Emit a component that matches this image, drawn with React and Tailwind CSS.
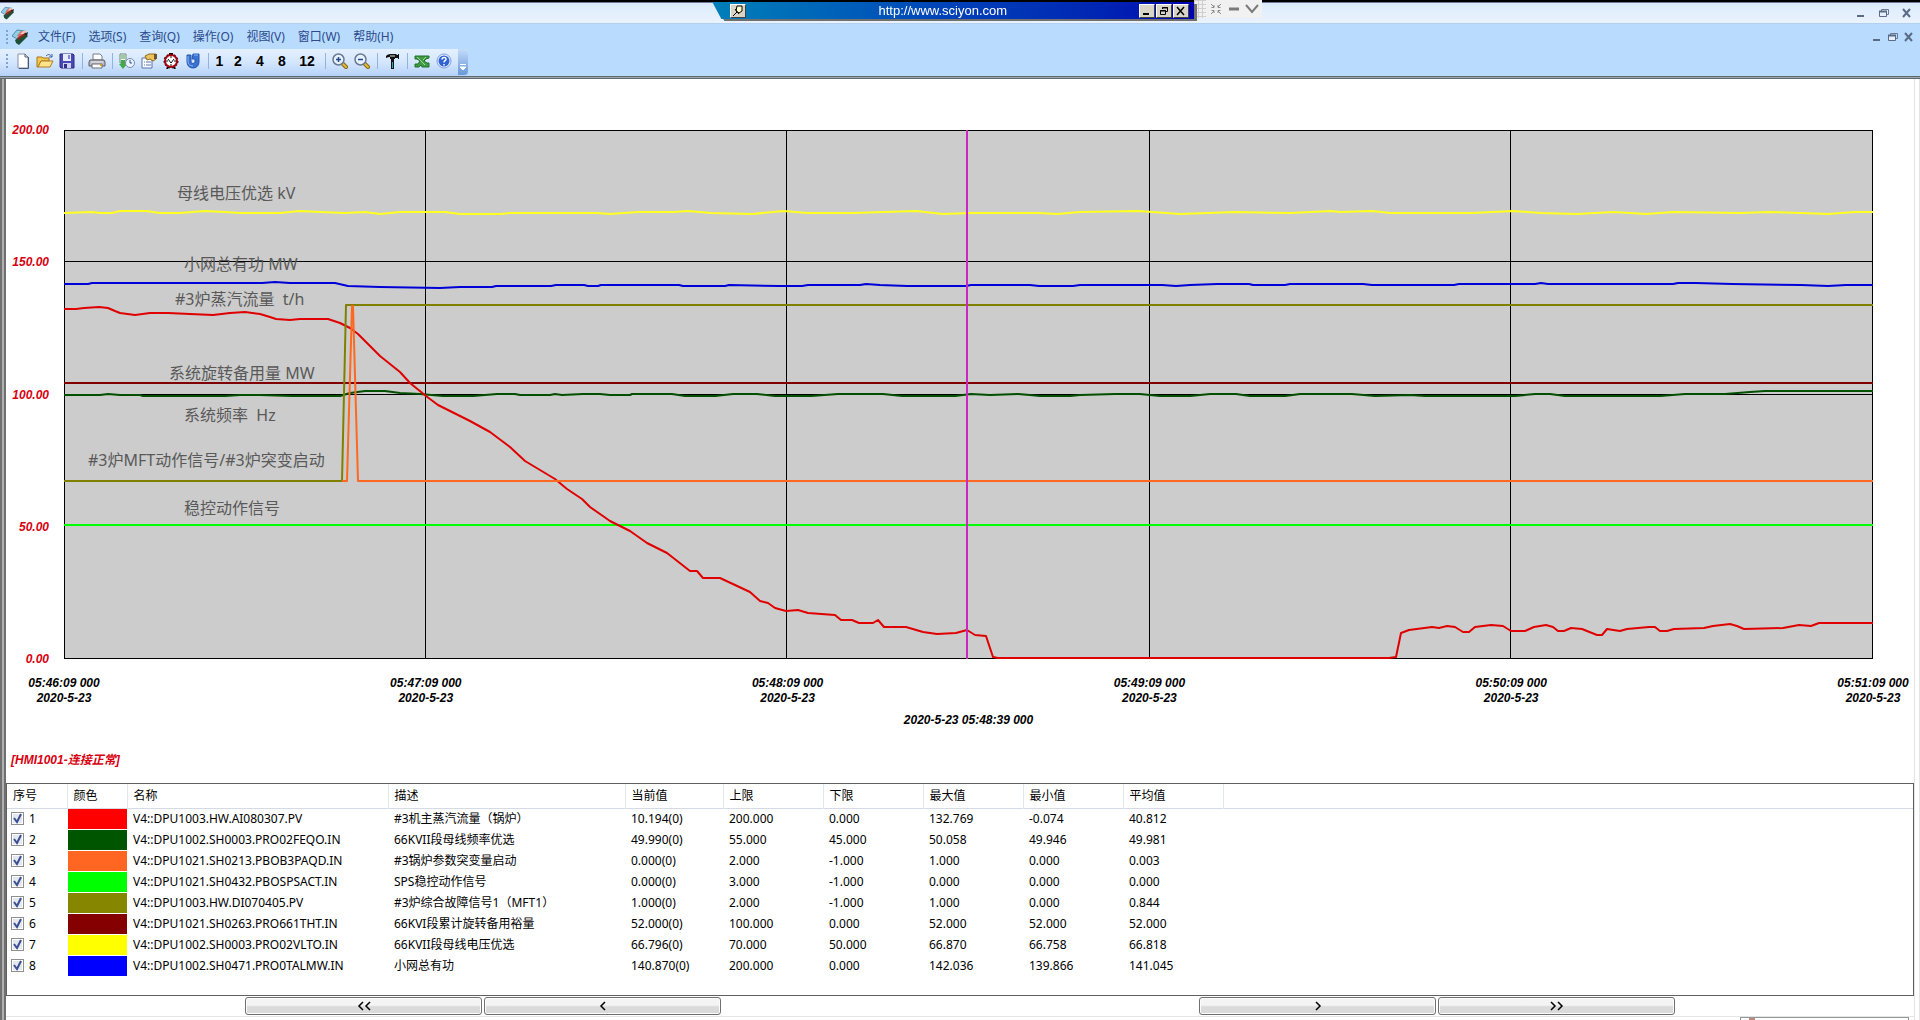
import React from "react";

const MENUS = ["文件(F)", "选项(S)", "查询(Q)", "操作(O)", "视图(V)", "窗口(W)", "帮助(H)"];

const Y_TICKS = ["200.00", "150.00", "100.00", "50.00", "0.00"];
const X_TICKS = ["05:46:09 000", "05:47:09 000", "05:48:09 000", "05:49:09 000", "05:50:09 000", "05:51:09 000"];
const V_LINES = [425, 786, 1149, 1510];
const H_LINES = [261, 394, 525];

const SERIES = [
  {
    color: "#00ff00",
    points: "64,525 1873,525",
  },
  { color: "#800000", points: "64,383 1873,383" },
  {
    color: "#005000",
    points:
      "64,395 100,395 108,394 120,395 140,395 143,396 225,396 240,395 260,395 292,396 340,396 350,393 365,391 385,391 400,393 420,394 443,396 473,396 497,394 515,394 520,395 550,395 555,394 562,395 583,394 600,394 610,395 630,395 632,394 672,394 685,396 715,396 733,394 757,394 775,396 811,396 838,394 883,394 902,396 955,396 971,394 990,395 1018,394 1030,395 1040,396 1070,396 1080,395 1115,394 1140,394 1160,396 1190,396 1210,394 1236,394 1250,396 1285,396 1300,394 1352,394 1375,396 1410,395 1425,396 1515,396 1535,394 1550,394 1565,396 1660,396 1685,394 1725,394 1750,392 1765,391 1873,391",
  },
  {
    color: "#ffff20",
    points:
      "64,213 92,212 100,213 112,213 120,211 146,211 160,213 180,213 205,211 225,212 240,213 280,213 300,211 320,212 345,213 365,212 380,214 400,212 445,212 460,214 501,214 510,213 597,213 610,214 638,212 674,212 688,211 711,213 752,214 784,211 807,213 852,213 916,211 943,214 971,213 1039,213 1057,214 1080,212 1139,211 1180,214 1235,212 1290,213 1331,211 1340,212 1372,211 1390,213 1472,213 1513,211 1541,213 1577,214 1614,212 1646,214 1673,212 1741,213 1769,212 1801,213 1828,214 1855,212 1873,212",
  },
  {
    color: "#0000d8",
    points:
      "64,284 88,284 92,283 262,283 275,282 290,283 335,283 348,286 380,287 440,288 460,287 492,287 496,286 551,286 556,285 584,285 588,286 598,286 601,285 679,285 683,286 725,286 729,285 779,286 802,286 808,285 860,285 866,284 880,285 907,286 966,286 971,285 1030,285 1039,286 1073,286 1080,285 1162,285 1176,286 1190,285 1217,284 1249,284 1253,285 1285,285 1290,284 1363,284 1372,285 1454,285 1459,284 1535,284 1541,283 1548,284 1673,284 1678,283 1696,283 1732,284 1801,285 1828,286 1846,285 1873,285",
  },
  {
    color: "#e00000",
    points:
      "64,309 76,309 84,308 99,307 108,308 115,311 120,313 135,315 150,313 168,313 190,314 213,315 230,313 245,312 260,314 270,317 276,319 290,320 300,319 328,319 340,323 350,328 358,334 365,341 380,356 400,372 410,383 426,396 438,405 470,421 490,432 510,447 525,461 555,479 567,489 582,499 590,507 610,521 630,531 647,543 667,553 690,571 697,571 703,578 720,578 750,592 760,601 768,603 775,608 786,611 798,610 808,613 835,615 841,620 852,620 859,623 873,623 878,620 884,627 906,627 923,632 937,634 956,633 967,630 975,635 986,636 993,657 998,658 1389,658 1396,657 1401,633 1409,630 1432,627 1439,628 1447,626 1455,627 1463,632 1469,632 1475,627 1491,625 1503,626 1511,631 1525,631 1534,627 1546,625 1553,627 1558,631 1564,631 1571,628 1582,629 1597,635 1602,635 1607,629 1620,631 1627,629 1649,627 1655,627 1660,631 1667,631 1674,629 1704,628 1713,626 1730,624 1737,626 1744,629 1783,628 1799,625 1811,626 1819,623 1873,623",
  },
  { color: "#808000", points: "64,481 342,481 346,305 1873,305" },
  { color: "#ff6820", points: "342,481 347,481 352,306 353,306 358,481 1873,481" },
];

const NOTES = [
  { text: "母线电压优选 kV", pos: "left-[113px] top-[10%]" },
  { text: "小网总有功 MW", pos: "left-[120px] top-[23.5%]" },
  { text: "#3炉蒸汽流量  t/h", pos: "left-[111px] top-[30%]" },
  { text: "系统旋转备用量 MW", pos: "left-[105px] top-[44%]" },
  { text: "系统频率  Hz", pos: "left-[120px] top-[52%]" },
  { text: "#3炉MFT动作信号/#3炉突变启动", pos: "left-[24px] top-[60.5%]" },
  { text: "稳控动作信号", pos: "left-[120px] top-[69.5%]" },
];

const HEADERS = [
  ["序号", "w-[60px]"],
  ["颜色", "w-[60px]"],
  ["名称", "w-[261px]"],
  ["描述", "w-[237px]"],
  ["当前值", "w-[98px]"],
  ["上限", "w-[100px]"],
  ["下限", "w-[100px]"],
  ["最大值", "w-[100px]"],
  ["最小值", "w-[100px]"],
  ["平均值", "w-[100px]"],
];

const ROWS = [
  ["bg-[#ff0000]", "V4::DPU1003.HW.AI080307.PV", "#3机主蒸汽流量（锅炉）", "10.194(0)", "200.000", "0.000", "132.769", "-0.074", "40.812"],
  ["bg-[#005500]", "V4::DPU1002.SH0003.PRO02FEQO.IN", "66KVII段母线频率优选", "49.990(0)", "55.000", "45.000", "50.058", "49.946", "49.981"],
  ["bg-[#ff6622]", "V4::DPU1021.SH0213.PBOB3PAQD.IN", "#3锅炉参数突变量启动", "0.000(0)", "2.000", "-1.000", "1.000", "0.000", "0.003"],
  ["bg-[#00ff00]", "V4::DPU1021.SH0432.PBOSPSACT.IN", "SPS稳控动作信号", "0.000(0)", "3.000", "-1.000", "0.000", "0.000", "0.000"],
  ["bg-[#868600]", "V4::DPU1003.HW.DI070405.PV", "#3炉综合故障信号1（MFT1）", "1.000(0)", "2.000", "-1.000", "1.000", "0.000", "0.844"],
  ["bg-[#850000]", "V4::DPU1021.SH0263.PRO661THT.IN", "66KVI段累计旋转备用裕量", "52.000(0)", "100.000", "0.000", "52.000", "52.000", "52.000"],
  ["bg-[#ffff00]", "V4::DPU1002.SH0003.PRO02VLTO.IN", "66KVII段母线电压优选", "66.796(0)", "70.000", "50.000", "66.870", "66.758", "66.818"],
  ["bg-[#0000ff]", "V4::DPU1002.SH0471.PRO0TALMW.IN", "小网总有功", "140.870(0)", "200.000", "0.000", "142.036", "139.866", "141.045"],
];

function Svg({ children, className = "h-4 w-4", box = "0 0 16 16" }) {
  return (
    <svg viewBox={box} className={className} fill="none" aria-hidden="true">
      {children}
    </svg>
  );
}

function AppIcon({ className }) {
  return (
    <Svg className={className}>
      <path d="M0 7 5 1l8 1-6 9z" fill="#8fcfe6" stroke="#4f8fa8" />
      <path d="M5 7l4-5 5 1-5 6z" fill="#d96a5c" />
      <path d="M8 5l3-3 4-1-3 4z" fill="#f0c4b4" />
      <path d="M3 11l10-6 3 2-9 9-3-2z" fill="#1d4f35" />
      <path d="M5 9l8-5 2 1-9 6z" fill="#8a2a22" />
      <path d="M12 5l4-2-1 4z" fill="#222" />
    </Svg>
  );
}

function NewIcon() {
  return (
    <Svg>
      <path d="M3 1h7l3 3v11H3z" fill="#fff" stroke="#8792a8" />
      <path d="M10 1v3h3M13.500 4v11.500H4" stroke="#4b5670" />
    </Svg>
  );
}
function OpenIcon() {
  return (
    <Svg className="h-4 w-[18px]" box="0 0 18 16">
      <path d="M1 4h5l1 1h6v3H5l-3 6H1z" fill="#f2c84e" stroke="#a8761a" />
      <path d="M5 8h12l-3 6H2z" fill="#ffe38a" stroke="#b07d1c" />
      <path d="M10 3c2-2 4-2 6 1M16 1v3h-3" stroke="#3e5f98" />
    </Svg>
  );
}
function SaveIcon() {
  return (
    <Svg>
      <path d="M1 1h13l1 1v13H2l-1-1z" fill="#4a48b8" stroke="#2c2a80" />
      <path d="M4 1h8v7H4z" fill="#e6ebfa" />
      <path d="M9 2h2v4H9z" fill="#7d86d0" />
      <path d="M4 10h8v5H4z" fill="#cfd2e8" />
      <path d="M5 11h3v4H5z" fill="#32308c" />
    </Svg>
  );
}
function PrintIcon() {
  return (
    <Svg className="h-4 w-[18px]" box="0 0 18 16">
      <path d="M5 1h7l2 2v4H5z" fill="#fff" stroke="#7c7c84" />
      <path d="M2 7h14l1 2v4H1V9z" fill="#b9bac2" stroke="#5d5d66" />
      <path d="M4 11h10v4H4z" fill="#fff" stroke="#6d6d76" />
      <path d="M3 9h12" stroke="#ececf2" />
      <path d="M12 12h2" stroke="#d8a030" strokeWidth="2" />
    </Svg>
  );
}
function TrendIcon() {
  return (
    <Svg>
      <path d="M1 1h6v9H1z" fill="#f0faf0" stroke="#6d8a78" />
      <path d="M2 3h4M2 5h4" stroke="#4c9a55" />
      <path d="M2 7h4v4h2l-4 5-4-5h2z" fill="#3faa46" />
      <circle cx="11" cy="10" r="4.500" fill="#eaf3ff" stroke="#7a8ba8" />
      <path d="M11 7v3h2" stroke="#33507e" />
    </Svg>
  );
}
function PropertyIcon() {
  return (
    <Svg>
      <path d="M1 5h10v10H1z" fill="#f8fbff" stroke="#5c74a8" />
      <path d="M3 9h1M3 12h1M5 9h5M5 12h5" stroke="#6378a8" />
      <path d="M4 3l4-2h7v5l-3 2-3-2-3 1z" fill="#ecc45a" stroke="#8f6a1c" />
      <path d="M13 1h3v5h-3z" fill="#6a5630" />
    </Svg>
  );
}
function ClockIcon() {
  return (
    <Svg>
      <path d="M5 14l-1 2M11 14l1 2M6 1h4" stroke="#200" strokeWidth="2" />
      <circle cx="8" cy="8" r="6" fill="#fff" stroke="#b00010" strokeWidth="2" />
      <circle cx="8" cy="8" r="7" stroke="#2a0000" strokeDasharray="2 2" />
      <path d="M5 6l3 4 3-4M8 3v2M8 11v2M3 8h2M11 8h2" stroke="#111" />
    </Svg>
  );
}
function RefreshIcon() {
  return (
    <Svg>
      <path d="M2 2h4v7c0 2 4 2 4 0V6H7l1-5h6v8c0 8-12 8-12 0z" fill="#3a72d0" stroke="#2356b4" />
      <path d="M3 3v6c0 3 3 4 5 4M9 2h4" stroke="#8ab6f2" />
    </Svg>
  );
}
function ZoomIcon({ plus }) {
  return (
    <Svg>
      <path d="M10 10l4 4" stroke="#8a6814" strokeWidth="4" strokeLinecap="round" />
      <path d="M11 11l3 3" stroke="#e2b93c" strokeWidth="2" strokeLinecap="round" />
      <circle cx="6.500" cy="6.500" r="5.500" fill="#e6f2ff" stroke="#6b7890" strokeWidth="1.500" />
      <path d={plus ? "M4 6.500h5M6.500 4v5" : "M4 6.500h5"} stroke="#26458a" strokeWidth="1.500" />
    </Svg>
  );
}
function HammerIcon() {
  return (
    <Svg>
      <path d="M2 3c2-2 4-2 6-2h4l1 1h1V1h1v5h-1V5h-3v1H6V4C5 4 4 4 2 5z" fill="#111" />
      <path d="M6 3h5" stroke="#ddd" />
      <path d="M7 6h3v10H7z" fill="#111" />
      <path d="M8 9h1v6H8z" fill="#2aa6c0" />
    </Svg>
  );
}
function ExcelIcon() {
  return (
    <Svg>
      <path d="M1 3h14v2l-3 1-2 2 3 2h2v4H8l-1-2-2 2H1v-3h3l2-3-3-2H1z" fill="#3f9c42" stroke="#226f2a" />
      <path d="M3 4l8 8M12 4l-3 3" stroke="#a6dca4" />
    </Svg>
  );
}
function HelpIcon() {
  return (
    <Svg>
      <circle cx="8" cy="8" r="7" fill="#e8f1ff" stroke="#7d9fdc" />
      <circle cx="8" cy="8" r="5.500" fill="#2f63d4" />
      <path d="M6 6.500c0-3 4.500-2.500 4 0C9.800 8 8 7.500 8 9.500M8 11v1.500" stroke="#fff" strokeWidth="1.500" />
    </Svg>
  );
}

function Tool({ label, width = "w-[22px]", children }) {
  return (
    <button type="button" aria-label={label} className={`flex h-6 items-center justify-center ${width}`}>
      {children}
    </button>
  );
}

function Sep() {
  return (
    <div className="flex w-2 justify-center">
      <div className="h-4 w-px bg-[#8fb4e0]" />
    </div>
  );
}

function Grip() {
  return (
    <div className="flex w-[3px] flex-col gap-[2px]">
      {[0, 1, 2, 3].map((i) => (
        <div key={i} className="h-[2px] w-[2px] bg-[#7aa3d6]" />
      ))}
    </div>
  );
}

function WindowButtons({ gap }) {
  return (
    <div className={`flex items-center ${gap}`}>
      <button type="button" aria-label="最小化">
        <Svg className="h-[10px] w-[10px]" box="0 0 10 10">
          <path d="M1 8h7" stroke="#5b6b85" strokeWidth="2" />
        </Svg>
      </button>
      <button type="button" aria-label="还原">
        <Svg className="h-[10px] w-[10px]" box="0 0 10 10">
          <path d="M2.500 3V1.500h7v5H8" stroke="#6b7a94" />
          <path d="M.5 3.500h7v5h-7z" fill="#e6f0fc" stroke="#5b6b85" />
          <path d="M0 3.500h8" stroke="#5b6b85" strokeWidth="2" />
        </Svg>
      </button>
      <button type="button" aria-label="关闭">
        <Svg className="h-[10px] w-[10px]" box="0 0 10 10">
          <path d="M1 1l7 8M8 1L1 9" stroke="#5b6b85" strokeWidth="2" />
        </Svg>
      </button>
    </div>
  );
}

function RemoteButton({ label, children }) {
  return (
    <button
      type="button"
      aria-label={label}
      className="flex h-[14px] w-[16px] items-center justify-center border border-t-white border-r-[#404040] border-b-[#404040] border-l-white bg-[#d8d4c8]"
    >
      {children}
    </button>
  );
}

function RemoteBar() {
  return (
    <div className="absolute top-0 left-[37.1%] z-10 flex items-start">
      <div className="pt-[2px] drop-shadow-[3px_2px_0_#707070]">
        <div className="flex h-[17px] w-[482px] items-center bg-linear-to-r from-[#0080b8] via-[#0040b8] to-[#0000b0] pr-[5px] pl-[18px] [clip-path:polygon(0_0,100%_0,100%_100%,9px_100%)]">
          <RemoteButton label="固定">
            <Svg className="h-3 w-3" box="0 0 12 12">
              <path d="M5 1h5v5L7 8 4 6z" fill="#ffffc8" stroke="#000" />
              <path d="M3 4l4 5M5 7l-4 4" stroke="#000" />
            </Svg>
          </RemoteButton>
          <div className="flex-1 text-center font-['Liberation_Sans',sans-serif] text-[13px] leading-4 text-white">
            http://www.sciyon.com
          </div>
          <div className="flex gap-px">
            <RemoteButton label="最小化远程窗口">
              <Svg className="h-[10px] w-[10px]" box="0 0 10 10">
                <path d="M1 8h6" stroke="#000" strokeWidth="2" />
              </Svg>
            </RemoteButton>
            <RemoteButton label="还原远程窗口">
              <Svg className="h-[10px] w-[10px]" box="0 0 10 10">
                <path d="M3.500 3V1.500h5v4H7M1.500 4.500h5v4h-5zM3 2h6M1 5h6" stroke="#000" />
              </Svg>
            </RemoteButton>
            <RemoteButton label="关闭远程窗口">
              <Svg className="h-[10px] w-[10px]" box="0 0 10 10">
                <path d="M1 1l7 8M8 1L1 9" stroke="#000" strokeWidth="1.500" />
              </Svg>
            </RemoteButton>
          </div>
        </div>
      </div>
      <div className="flex h-[18px] w-[68px] items-center bg-[#f1f1f1]">
        <Svg className="h-[18px] w-3" box="0 0 12 18">
          <path
            d="M0 .5h12M0 4.500h12M0 8.500h12M0 12.500h12M0 16.500h12M.5 0v18M4.500 0v18M8.500 0v18"
            stroke="#cfcfcf"
          />
        </Svg>
        <button type="button" aria-label="收缩" className="ml-1">
          <Svg className="h-3 w-3" box="0 0 12 12">
            <path d="M1 1l3 3M4 2v2.500H1.500M11 1L8 4M8 2v2.500h2.500M1 11l3-3M4 10V7.500H1.500M11 11L8 8M8 10V7.500h2.500" stroke="#8a8a8a" />
          </Svg>
        </button>
        <button type="button" aria-label="隐藏" className="ml-[6px]">
          <Svg className="h-3 w-3" box="0 0 12 12">
            <path d="M1 6h10" stroke="#7a7a7a" strokeWidth="3" />
          </Svg>
        </button>
        <button type="button" aria-label="展开" className="ml-[4px]">
          <Svg className="h-3 w-4" box="0 0 16 12">
            <path d="M2 2l6 7 6-7" stroke="#7a7a7a" strokeWidth="2" />
          </Svg>
        </button>
      </div>
    </div>
  );
}

function Toolbar() {
  return (
    <div className="flex h-[27px] bg-[#b9dcfe]">
      <div className="flex items-start rounded-r bg-linear-to-b from-[#e4f0ff] via-[#d4e6fe] to-[#b4d2f8] pl-[6px]">
        <div className="flex h-6 items-center">
          <Grip />
        </div>
        <div className="ml-[3px] flex items-center font-['Liberation_Sans',sans-serif] text-sm font-bold text-black">
          <Tool label="新建"><NewIcon /></Tool>
          <Tool label="打开"><OpenIcon /></Tool>
          <Tool label="保存"><SaveIcon /></Tool>
          <Sep />
          <Tool label="打印"><PrintIcon /></Tool>
          <Sep />
          <Tool label="趋势"><TrendIcon /></Tool>
          <Tool label="属性"><PropertyIcon /></Tool>
          <Tool label="时间"><ClockIcon /></Tool>
          <Tool label="刷新"><RefreshIcon /></Tool>
          <Sep />
          <Tool label="1" width="w-[15px]">1</Tool>
          <Tool label="2">2</Tool>
          <Tool label="4">4</Tool>
          <Tool label="8">8</Tool>
          <Tool label="12" width="w-[28px]">12</Tool>
          <Sep />
          <Tool label="放大"><ZoomIcon plus /></Tool>
          <Tool label="缩小"><ZoomIcon /></Tool>
          <Sep />
          <Tool label="设置"><HammerIcon /></Tool>
          <Sep />
          <Tool label="导出"><ExcelIcon /></Tool>
          <Tool label="帮助"><HelpIcon /></Tool>
        </div>
        <button
          type="button"
          aria-label="更多"
          className="ml-[3px] flex h-[26px] w-[10px] items-end justify-center rounded-r bg-linear-to-b from-[#c4dcfa] to-[#6a98d8] pb-1"
        >
          <Svg className="h-2 w-2" box="0 0 8 8">
            <path d="M1 1.500h6M1 4h6L4 7z" stroke="#fff" fill="#fff" />
          </Svg>
        </button>
      </div>
    </div>
  );
}

function Chart() {
  return (
    <div className="flex flex-1 flex-col pt-[51px] pr-[41px] pl-[58px]">
      <div className="relative flex min-h-[400px] flex-1 flex-col">
        <svg
          viewBox="64 130 1809 529"
          preserveAspectRatio="none"
          className="h-0 w-full flex-1 overflow-visible bg-[#cccccc]"
          fill="none"
          role="img"
          aria-label="趋势曲线"
        >
          <g shapeRendering="crispEdges">
            {V_LINES.map((x) => (
              <path key={x} d={`M${x}.5 130V658`} stroke="#000" vectorEffect="non-scaling-stroke" />
            ))}
            {H_LINES.map((y) => (
              <path key={y} d={`M64 ${y}.5H1873`} stroke="#000" vectorEffect="non-scaling-stroke" />
            ))}
            <rect x="64.500" y="130.500" width="1808" height="528" stroke="#000" vectorEffect="non-scaling-stroke" />
          </g>
          {SERIES.map((s) => (
            <polyline
              key={s.color}
              points={s.points}
              stroke={s.color}
              strokeWidth="2"
              strokeLinejoin="round"
              vectorEffect="non-scaling-stroke"
            />
          ))}
          <path d="M967 130V659" stroke="#c828c0" strokeWidth="2" vectorEffect="non-scaling-stroke" />
        </svg>
        <div className="absolute inset-y-0 -left-[60px] flex w-[45px] flex-col justify-between text-right text-xs font-bold text-[#d80010] italic">
          {Y_TICKS.map((t) => (
            <div key={t} className="flex h-0 items-center justify-end">
              {t}
            </div>
          ))}
        </div>
        {NOTES.map((n) => (
          <div
            key={n.text}
            className={`absolute font-['Noto_Sans','Noto_Sans_CJK_SC',sans-serif] text-base leading-5 whitespace-pre text-[#595959] ${n.pos}`}
          >
            {n.text}
          </div>
        ))}
      </div>
      <div className="mt-[17px] flex justify-between text-center text-xs leading-[15px] font-bold text-black italic">
        {X_TICKS.map((t) => (
          <div key={t} className="flex w-0 justify-center whitespace-nowrap">
            <div>
              {t}
              <br />
              2020-5-23
            </div>
          </div>
        ))}
      </div>
      <div className="mt-[7px] text-center text-xs leading-[15px] font-bold text-black italic">2020-5-23 05:48:39 000</div>
    </div>
  );
}

function TagTable() {
  return (
    <div className="border border-[#606060] bg-white pb-[19px]">
      <table className="w-full table-fixed border-collapse font-['Noto_Sans','Noto_Sans_CJK_SC',sans-serif] text-xs leading-5 text-black">
        <thead>
          <tr className="h-[24px] border-b border-[#d5dbe6]">
            {HEADERS.map(([h, w]) => (
              <th key={h} className={`border-r border-[#e2e6ee] p-0 pl-[6px] text-left font-normal ${w}`}>
                {h}
              </th>
            ))}
            <th className="p-0" />
          </tr>
        </thead>
        <tbody>
          {ROWS.map(([swatch, name, ...rest], i) => (
            <tr key={name} className="h-[21px]">
              <td className="p-0 pl-1">
                <label className="flex items-center gap-[5px]">
                  <span className="relative flex h-[13px] w-[13px]">
                    <input
                      type="checkbox"
                      defaultChecked
                      className="peer h-[13px] w-[13px] appearance-none border border-[#8e8f8f] bg-[#e4e8ee] shadow-[inset_0_0_0_1px_#fff]"
                    />
                    <svg
                      viewBox="0 0 13 13"
                      className="pointer-events-none absolute inset-0 hidden h-[13px] w-[13px] peer-checked:block"
                      fill="none"
                      aria-hidden="true"
                    >
                      <path d="M3 6l3 4 4-8" stroke="#3b4f94" strokeWidth="2" />
                    </svg>
                  </span>
                  {i + 1}
                </label>
              </td>
              <td className="p-0 pl-px">
                <div className={`h-5 ${swatch}`} />
              </td>
              {[name, ...rest].map((c, j) => (
                <td key={j} className="p-0 pl-[6px] whitespace-nowrap">
                  {c}
                </td>
              ))}
              <td className="p-0" />
            </tr>
          ))}
        </tbody>
      </table>
    </div>
  );
}

function NavButton({ label, d }) {
  return (
    <button
      type="button"
      aria-label={label}
      className="flex h-[18px] w-[237px] items-center justify-center rounded-[3px] border border-[#707070] bg-linear-to-b from-[#f4f4f4] from-45% to-[#dadada] to-55% shadow-[inset_0_0_0_1px_#fcfcfc]"
    >
      <Svg className="h-[10px] w-4" box="0 0 16 10">
        <path d={d} stroke="#000" strokeWidth="1.500" />
      </Svg>
    </button>
  );
}

export default function App() {
  return (
    <div className="relative flex min-h-screen flex-col bg-white font-['Liberation_Sans','Noto_Sans_CJK_SC',sans-serif] text-xs text-black">
      <RemoteBar />
      <header className="border-t-2 border-black">
        <div className="flex h-[22px] items-center justify-between border-t border-b border-t-[#70789a] border-b-[#b4d0f0] bg-linear-to-b from-[#dcecfc] to-[#eaf2fd] pr-[8px] pl-[1px]">
          <AppIcon className="h-[14px] w-[13px]" />
          <WindowButtons gap="gap-[13px]" />
        </div>
        <div className="flex h-[25px] items-center justify-between bg-[#b9dcfe] pr-[6px] pl-[6px]">
          <nav className="flex items-center">
            <Grip />
            <AppIcon className="ml-[3px] h-4 w-4" />
            <div className="ml-[10px] flex gap-[13px] font-['Noto_Sans','Noto_Sans_CJK_SC',sans-serif] text-xs text-[#2c4a8c]">
              {MENUS.map((m) => (
                <button key={m} type="button" className="whitespace-nowrap">
                  {m}
                </button>
              ))}
            </div>
          </nav>
          <WindowButtons gap="gap-[6px]" />
        </div>
        <Toolbar />
        <div className="h-[3px] border-t border-b border-[#606870] bg-[#9aa8b4]" />
      </header>
      <div className="flex flex-1">
        <div className="w-[6px] border-x-2 border-[#707070] bg-[#b0b0b0]" />
        <main className="flex min-w-0 flex-1 flex-col">
          <Chart />
          <div className="mt-[25px] mb-[15px] pl-[5px] text-xs leading-[15px] font-bold text-[#d80010] italic">
            [HMI1001-连接正常]
          </div>
          <TagTable />
          <div className="flex justify-between border-b border-[#e4e4e4] pt-px pr-[239px] pb-px pl-[239px]">
            <div className="flex gap-[2px]">
              <NavButton label="快退" d="M7 1L3 5l4 4M14 1l-4 4 4 4" />
              <NavButton label="后退" d="M10 1L6 5l4 4" />
            </div>
            <div className="flex gap-[2px]">
              <NavButton label="前进" d="M6 1l4 4-4 4" />
              <NavButton label="快进" d="M2 1l4 4-4 4M9 1l4 4-4 4" />
            </div>
          </div>
          <div className="flex h-[3px] justify-end pr-[5px]">
            <div className="flex w-[169px] border border-b-0 border-[#909898] pl-2">
              <div className="h-[2px] w-[6px] bg-[#c08878]" />
            </div>
          </div>
        </main>
        <div className="w-[6px] border-x border-[#e4e4e4] bg-white" />
      </div>
    </div>
  );
}
